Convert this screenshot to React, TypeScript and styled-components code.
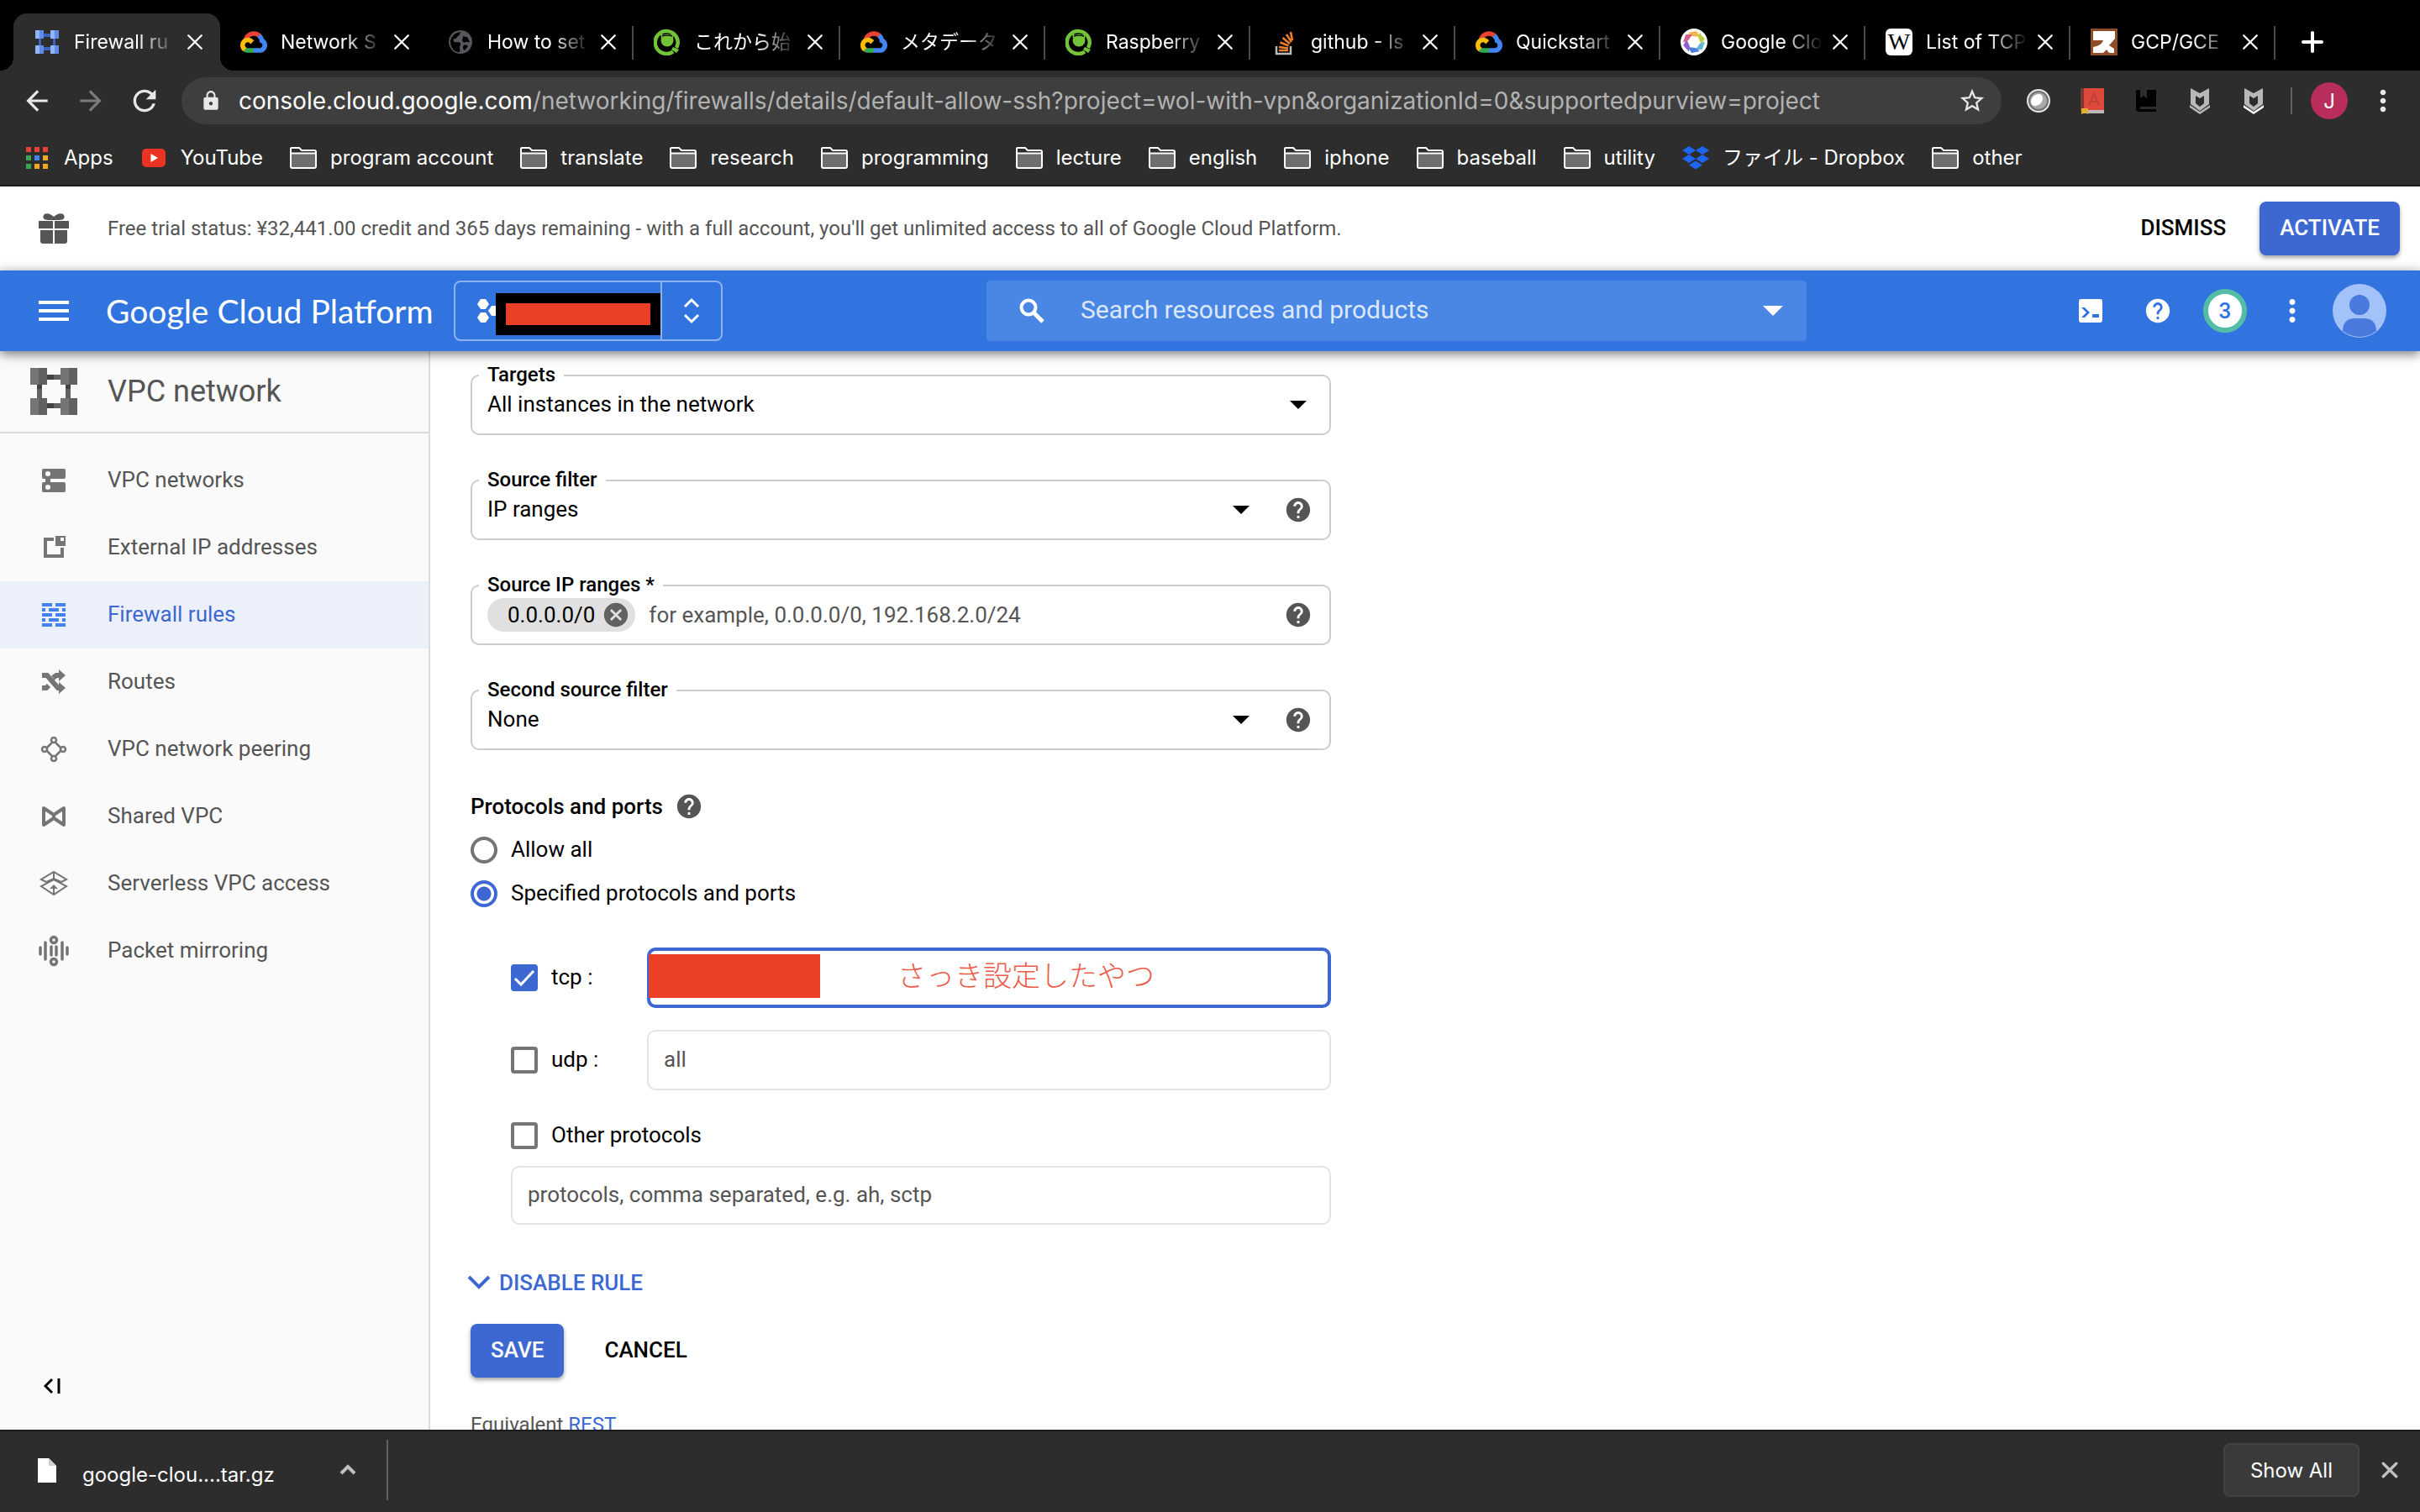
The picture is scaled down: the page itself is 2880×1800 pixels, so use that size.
import React, { useState } from "react";
import styled, { createGlobalStyle, css } from "styled-components";
import {
  MdArrowBack,
  MdArrowForward,
  MdCancel,
  MdHelp,
  MdLock,
  MdMoreVert,
  MdRefresh,
  MdStarBorder,
} from "react-icons/md";

const ui = `Inter, "Noto Sans CJK JP", sans-serif`;
const roboto = `Roboto, "Noto Sans CJK JP", sans-serif`;

const color = {
  chrome: "#2d2d2d",
  bar: "#3174e0",
  primary: "#3d68d2",
  text: "#000",
  muted: "#555",
  icon: "#757575",
  redact: "#ec4026",
};

const Global = createGlobalStyle`
  *, *::before, *::after { box-sizing: border-box; }
  body { margin: 0; background: #fff; font-family: ${roboto}; }
  button, input, select { font: inherit; color: inherit; margin: 0; }
  button { background: none; border: 0; padding: 0; cursor: pointer; }
  a { color: inherit; text-decoration: none; }
  svg { display: block; flex: none; }
  ul { list-style: none; margin: 0; padding: 0; }
`;

const Page = styled.div`
  display: flex;
  flex-direction: column;
  height: 100vh;
  overflow: hidden;
`;

/* ---------- browser window ---------- */

const TabStrip = styled.div`
  display: flex;
  align-items: flex-end;
  flex: none;
  height: 84px;
  padding: 0 172px 0 16px;
  background: #000;
  font-family: ${ui};
`;

const TabItem = styled.div<{ $active?: boolean; $line?: boolean; $wide?: boolean }>`
  position: relative;
  display: flex;
  align-items: center;
  flex: 1 1 ${(p) => (p.$wide ? 246 : 244)}px;
  min-width: 0;
  height: 68px;
  padding: 0 20px 0 24px;
  color: #fff;
  font-size: 23px;
  ${(p) =>
    p.$line &&
    css`
      &::after {
        content: "";
        position: absolute;
        right: 0;
        top: 15px;
        width: 2px;
        height: 40px;
        background: #4a4a4a;
      }
    `}
  ${(p) =>
    p.$active &&
    css`
      background: ${color.chrome};
      border-radius: 16px 16px 0 0;
      &::before,
      &::after {
        content: "";
        position: absolute;
        bottom: 0;
        width: 16px;
        height: 16px;
      }
      &::before {
        left: -16px;
        background: radial-gradient(circle at 0 0, transparent 16px, ${color.chrome} 16px);
      }
      &::after {
        right: -16px;
        background: radial-gradient(circle at 100% 0, transparent 16px, ${color.chrome} 16px);
      }
    `}
`;

const TabTitle = styled.a`
  flex: 1;
  min-width: 0;
  margin: 0 8px 0 16px;
  overflow: hidden;
  white-space: nowrap;
  line-height: 36px;
  mask-image: linear-gradient(to right, #000 60%, transparent 98%);
`;

const IconButton = styled.button`
  display: grid;
  place-items: center;
  flex: none;
`;

const NewTab = styled(IconButton)`
  width: 88px;
  height: 68px;
  margin-right: -88px;
  color: #fff;
`;

const Toolbar = styled.div`
  display: flex;
  align-items: center;
  flex: none;
  height: 72px;
  padding: 0 12px;
  background: ${color.chrome};
  color: #e8e8e8;
  font-family: ${ui};
`;

const NavButton = styled(IconButton)<{ $dim?: boolean }>`
  width: 64px;
  height: 56px;
  color: ${(p) => (p.$dim ? "#7d7d7d" : "#e8e8e8")};
`;

const Omnibox = styled.div`
  display: flex;
  align-items: center;
  flex: 1;
  min-width: 0;
  height: 56px;
  margin: 0 12px;
  padding: 0 18px 0 22px;
  gap: 20px;
  border-radius: 28px;
  background: #3e3e3e;
`;

const Url = styled.div`
  flex: 1;
  min-width: 0;
  overflow: hidden;
  white-space: nowrap;
  font-size: 28px;
  line-height: 40px;
  color: #b2b2b2;
  strong {
    font-weight: 400;
    color: #fff;
  }
`;

const Divider = styled.span<{ $h: number; $m: number }>`
  flex: none;
  width: 2px;
  height: ${(p) => p.$h}px;
  margin: 0 ${(p) => p.$m}px;
  background: #606060;
`;

const Profile = styled.button`
  flex: none;
  width: 44px;
  height: 44px;
  margin: 0 10px;
  border-radius: 50%;
  background: #b92d5d;
  color: #fff;
  font-size: 24px;
`;

const Bookmarks = styled.nav`
  display: flex;
  align-items: center;
  gap: 32px;
  flex: none;
  height: 66px;
  padding: 0 28px;
  border-bottom: 2px solid #1c1c1f;
  background: ${color.chrome};
  font-family: ${ui};
`;

const Bookmark = styled.a`
  display: flex;
  align-items: center;
  gap: 16px;
  color: #fff;
  font-size: 24px;
  line-height: 36px;
  white-space: nowrap;
`;

/* ---------- console header ---------- */

const Banner = styled.section`
  display: flex;
  align-items: center;
  flex: none;
  height: 100px;
  padding: 0 24px 0 44px;
  background: linear-gradient(#fff 88%, #f4f4f4);
  color: ${color.muted};
`;

const BannerText = styled.p`
  flex: 1;
  margin: 0 0 0 44px;
  font-size: 24px;
  line-height: 32px;
`;

const Button = styled.button<{ $filled?: boolean }>`
  flex: none;
  height: 64px;
  padding: 0 24px 2px;
  border-radius: 8px;
  font-size: 26px;
  font-weight: 500;
  line-height: 32px;
  color: ${(p) => (p.$filled ? "#fff" : color.text)};
  background: ${(p) => (p.$filled ? color.primary : "transparent")};
  box-shadow: ${(p) => (p.$filled ? "0 3px 5px rgba(0, 0, 0, 0.35)" : "none")};
`;

const BannerActions = styled.div`
  display: flex;
  gap: 16px;
`;

const ConsoleBar = styled.header`
  position: relative;
  z-index: 1;
  display: flex;
  align-items: center;
  flex: none;
  height: 96px;
  padding: 0 32px 0 44px;
  background: ${color.bar};
  color: #fff;
  box-shadow: 0 4px 12px rgba(0, 0, 0, 0.5);
`;

const Brand = styled.a`
  width: 414px;
  margin-left: 42px;
  font-family: Lato, sans-serif;
  font-size: 39px;
  line-height: 48px;
  white-space: nowrap;
`;

const ProjectPicker = styled.button`
  display: flex;
  align-items: center;
  flex: none;
  width: 320px;
  height: 72px;
  border: 2px solid rgba(255, 255, 255, 0.45);
  border-radius: 8px;
  color: #fff;
`;

const ProjectName = styled.span`
  display: flex;
  align-items: center;
  flex: 1;
  height: 100%;
  padding-left: 26px;
  border-right: 2px solid rgba(255, 255, 255, 0.45);
`;

const HiddenName = styled.span`
  flex: 1;
  height: 50px;
  margin-top: 14px;
  margin-bottom: 6px;
  border: 12px solid #000;
  background: ${color.redact};
`;

const PickerArrows = styled.span`
  display: grid;
  place-items: center;
  width: 70px;
`;

const Search = styled.label`
  display: flex;
  align-items: center;
  flex: 1 1 0;
  max-width: 976px;
  height: 72px;
  margin-left: 314px;
  padding: 0 28px 0 36px;
  border-radius: 4px;
  background: #4a87e5;
  input {
    flex: 1;
    min-width: 0;
    margin-left: 40px;
    padding: 0 0 4px;
    border: 0;
    outline: 0;
    background: none;
    font-size: 30px;
  }
  input::placeholder {
    color: #dbe7fa;
    opacity: 1;
  }
`;

const Tools = styled.div`
  display: flex;
  align-items: center;
  margin-left: auto;
`;

const Tool = styled(IconButton)`
  width: 80px;
  height: 80px;
  color: #fff;
`;

const Count = styled.span`
  display: grid;
  place-items: center;
  width: 52px;
  height: 52px;
  border: 6px solid #54bda5;
  border-radius: 50%;
  background: #fff;
  color: ${color.bar};
  font-size: 26px;
  font-weight: 500;
`;

/* ---------- sidebar ---------- */

const Body = styled.div`
  display: flex;
  flex: 1;
  min-height: 0;
`;

const Sidebar = styled.aside`
  display: flex;
  flex-direction: column;
  flex: none;
  width: 512px;
  border-right: 2px solid #dcdcdc;
  background: #fafafa;
  color: ${color.muted};
`;

const Product = styled.h1`
  display: flex;
  align-items: center;
  gap: 36px;
  height: 98px;
  margin: 0 0 16px;
  padding: 0 36px;
  border-bottom: 2px solid #dcdcdc;
  font-size: 36px;
  font-weight: 400;
`;

const NavLink = styled.a<{ $active?: boolean }>`
  display: flex;
  align-items: center;
  gap: 44px;
  height: 80px;
  padding: 0 44px;
  font-size: 26px;
  line-height: 32px;
  color: ${(p) => (p.$active ? color.primary : color.muted)};
  background: ${(p) => (p.$active ? "#ecf0fa" : "transparent")};
  svg {
    color: ${(p) => (p.$active ? "#4480ee" : color.icon)};
  }
  span {
    padding-bottom: 2px;
  }
`;

const Collapse = styled(IconButton)`
  margin: auto 0 32px 42px;
  width: 40px;
  height: 40px;
  color: #000;
`;

/* ---------- form ---------- */

const Main = styled.main`
  flex: 1;
  min-width: 0;
  overflow: hidden;
  padding: 28px 48px 0;
  color: ${color.text};
  font-size: 26px;
  line-height: 32px;
`;

const Form = styled.form`
  display: flex;
  flex-direction: column;
  max-width: 1024px;
`;

const Fields = styled.div`
  display: flex;
  flex-direction: column;
  gap: 53px;
`;

const FieldBox = styled.div`
  position: relative;
  display: flex;
  align-items: center;
  height: 72px;
  padding: 0 20px 0 18px;
  border: 2px solid #ccc;
  border-radius: 10px;
  > label {
    position: absolute;
    top: -18px;
    left: 8px;
    padding: 0 10px;
    background: #fff;
    font-size: 24px;
    font-weight: 500;
  }
`;

const Select = styled.select`
  flex: 1;
  min-width: 0;
  height: 100%;
  padding: 0 0 2px;
  border: 0;
  outline: 0;
  appearance: none;
  background: none;
`;

const HelpButton = styled(IconButton)`
  width: 34px;
  height: 34px;
  color: #555;
`;

const CaretSlot = styled.span<{ $gap?: boolean }>`
  display: grid;
  place-items: center;
  width: 34px;
  margin-right: ${(p) => (p.$gap ? 34 : 0)}px;
  pointer-events: none;
`;

const Chip = styled.span`
  display: flex;
  align-items: center;
  gap: 8px;
  flex: none;
  height: 40px;
  padding: 0 6px 0 24px;
  border-radius: 20px;
  background: #e0e0e0;
  button {
    color: #616161;
  }
`;

const PlainInput = styled.input`
  flex: 1;
  min-width: 0;
  height: 100%;
  padding: 0 0 0 16px;
  border: 0;
  outline: 0;
  background: none;
  &::placeholder {
    color: ${color.muted};
    opacity: 1;
  }
`;

const Heading = styled.h2`
  display: flex;
  align-items: center;
  gap: 14px;
  height: 32px;
  margin: 51px 0 20px;
  font-size: 26px;
  font-weight: 500;
`;

const Choices = styled.div`
  display: flex;
  flex-direction: column;
  gap: 20px;
`;

const Choice = styled.label`
  display: flex;
  align-items: center;
  gap: 16px;
  height: 32px;
`;

const ChoiceText = styled.span`
  padding-bottom: 2px;
`;

const Radio = styled.input`
  appearance: none;
  flex: none;
  width: 32px;
  height: 32px;
  border: 4px solid #757575;
  border-radius: 50%;
  background: #fff;
  &:checked {
    border-color: ${color.primary};
    background: radial-gradient(circle, ${color.primary} 8px, #fff 9px);
  }
`;

const Check = styled.span`
  display: grid;
  flex: none;
  width: 32px;
  height: 32px;
  > * {
    grid-area: 1 / 1;
  }
  svg {
    pointer-events: none;
  }
  input {
    appearance: none;
    width: 32px;
    height: 32px;
    border: 4px solid #757575;
    border-radius: 4px;
    background: #fff;
  }
  input:checked {
    border-color: ${color.primary};
    background: ${color.primary};
  }
`;

const Ports = styled.div`
  display: flex;
  flex-direction: column;
  gap: 26px;
  margin: 48px 0 38px 48px;
`;

const PortRow = styled.div`
  display: grid;
  grid-template-columns: 162px 1fr;
  align-items: center;
`;

const PortField = styled.div`
  position: relative;
`;

const PortInput = styled.input<{ $active?: boolean; $short?: boolean }>`
  display: block;
  width: 100%;
  height: ${(p) => (p.$short ? 70 : 72)}px;
  padding: 0 18px 2px;
  border: ${(p) => (p.$active ? `4px solid ${color.primary}` : "2px solid #e3e3e3")};
  border-radius: 10px;
  outline: 0;
  background: #fff;
  &::placeholder {
    color: ${color.muted};
    opacity: 1;
  }
`;

const Redaction = styled.span`
  position: absolute;
  left: 2px;
  top: 8px;
  width: 204px;
  height: 52px;
  background: ${color.redact};
`;

const Note = styled.span`
  position: absolute;
  left: 298px;
  top: 8px;
  color: #ec5a48;
  font-family: "Noto Sans CJK JP", sans-serif;
  font-size: 34px;
  font-weight: 300;
  line-height: 48px;
  white-space: nowrap;
`;

const OtherPorts = styled.div`
  display: flex;
  flex-direction: column;
  gap: 20px;
  margin-left: 48px;
`;

const Toggle = styled.button`
  display: flex;
  align-items: center;
  align-self: flex-start;
  gap: 10px;
  margin: 53px 0 33px -4px;
  color: ${color.primary};
  font-weight: 500;
`;

const Actions = styled.div`
  display: flex;
  gap: 24px;
`;

const Equivalent = styled.p`
  margin: 40px 0 0;
  color: ${color.muted};
  font-size: 24px;
  a {
    color: ${color.primary};
  }
`;

/* ---------- download shelf ---------- */

const Shelf = styled.footer`
  display: flex;
  align-items: center;
  flex: none;
  height: 98px;
  padding: 0 18px 4px 40px;
  border-top: 2px solid #1c1c1e;
  background: ${color.chrome};
  color: #fff;
  font-family: ${ui};
`;

const FileName = styled.a`
  width: 290px;
  margin: 12px 0 0 26px;
  font-size: 24px;
  line-height: 36px;
`;

const ShowAll = styled.button`
  height: 64px;
  margin-left: auto;
  padding: 0 30px;
  border: 2px solid #424444;
  border-radius: 8px;
  background: #3a3a3a;
  color: #fff;
  font-size: 24px;
`;

const ShelfClose = styled(IconButton)`
  width: 36px;
  height: 36px;
  margin-left: 18px;
  color: #c0c0c0;
`;

/* ---------- icons ---------- */

const Cross = ({ size = 18, w = 3 }: { size?: number; w?: number }) => (
  <svg width={size} height={size} viewBox="0 0 18 18" fill="none" stroke="currentColor" strokeWidth={w} strokeLinecap="round">
    <path d="M2 2l14 14M16 2L2 16" />
  </svg>
);

const Caret = ({ w = 20 }: { w?: number }) => (
  <svg width={w} height={w / 2} viewBox="0 0 20 10" fill="currentColor">
    <path d="M0 0h20L10 10z" />
  </svg>
);

const SearchIcon = () => (
  <svg width="36" height="36" viewBox="0 0 36 36" fill="none" stroke="currentColor">
    <circle cx="14" cy="14" r="8.500" strokeWidth="4" />
    <path d="M20 20l11 11" strokeWidth="5" />
  </svg>
);

const VpcIcon = ({ size, light, dark, deep }: { size: number; light: string; dark: string; deep: string }) => (
  <svg width={size} height={size} viewBox="0 0 56 56">
    <path fill={dark} d="M8 18h6v20H8zM42 18h6v20h-6zM18 8h20v6H18zM18 42h20v6H18z" />
    <path fill={deep} d="M20 8h8v6h-8zM20 42h8v6h-8zM8 20h6v5H8zM42 20h6v5h-6z" />
    {[[0, 0], [36, 0], [0, 36], [36, 36]].map(([x, y]) => (
      <g key={`${x}-${y}`}>
        <rect x={x} y={y} width="10" height="20" fill={light} />
        <rect x={x + 10} y={y} width="10" height="20" fill={dark} />
      </g>
    ))}
  </svg>
);

const TabVpc = () => (
  <svg width="32" height="32" viewBox="0 0 32 32">
    <path fill="#3c62c0" d="M6 11h3v10H6zM23 11h3v10h-3zM11 6h10v4H11zM11 22h10v4H11z" />
    <path fill="#93b4f4" d="M2 2h5v10H2zM20 2h5v10h-5zM2 20h5v10H2zM20 20h5v10h-5z" />
    <path fill="#5f8be6" d="M7 2h5v10H7zM25 2h5v10h-5zM7 20h5v10H7zM25 20h5v10h-5z" />
  </svg>
);

const GcpIcon = () => (
  <svg width="32" height="26" viewBox="0 0 256 206">
    <path fill="#EA4335" d="M170.252 56.819l22.253-22.253 1.483-9.37C153.437-11.677 88.976-7.496 52.42 33.92 42.267 45.423 34.734 59.764 30.717 74.573l7.97-1.123 44.505-7.34 3.436-3.513c19.797-21.742 53.27-24.667 76.128-6.168z" />
    <path fill="#4285F4" d="M224.205 73.918a100.249 100.249 0 0 0-30.217-48.722l-31.232 31.232a55.515 55.515 0 0 1 20.379 44.037v5.544c15.35 0 27.797 12.445 27.797 27.796 0 15.352-12.446 27.485-27.797 27.485h-55.671l-5.466 5.934v33.34l5.466 5.231h55.67c39.93.311 72.553-31.494 72.864-71.424a72.303 72.303 0 0 0-31.793-60.453" />
    <path fill="#34A853" d="M71.87 205.796h55.593V161.29H71.87a27.275 27.275 0 0 1-11.4-2.498l-7.887 2.42-22.409 22.253-1.952 7.574c12.567 9.489 27.9 14.825 43.647 14.757" />
    <path fill="#FBBC05" d="M71.87 61.425C31.94 61.664-.237 94.228.001 134.158a72.301 72.301 0 0 0 28.222 56.88l32.248-32.246c-13.99-6.322-20.208-22.786-13.887-36.776 6.32-13.99 22.786-20.208 36.775-13.888a27.796 27.796 0 0 1 13.887 13.888l32.248-32.248A72.224 72.224 0 0 0 71.87 61.425" />
  </svg>
);

const GlobeIcon = () => (
  <svg width="32" height="32" viewBox="0 0 32 32">
    <circle cx="16" cy="16" r="14" fill="#56575c" />
    <path fill="#000" d="M17 4c-3 1-1 4-4 5-2 1-1 3-4 3-2 0-2 3 0 4 3 1 6-1 7 2 1 2-2 3-1 5 1 3-1 4 1 5C8 29 4 22 4 15 5 9 10 4 17 4zM19 9c2 0 3 2 5 1l3 6c-1 1-3-1-5 0-2 2-4-1-4-3 0-1 2-2 1-4zM20 20c2-1 4 0 5 1l-4 5c-2-1-3-5-1-6z" />
  </svg>
);

const QiitaIcon = () => (
  <svg width="32" height="32" viewBox="0 0 32 32">
    <path d="M27 23A13.500 13.500 0 1 0 23 27.500" fill="none" stroke="#73c238" strokeWidth="4.500" />
    <path d="M23 22l7 3-3 4-6-4z" fill="#73c238" />
    <circle cx="16" cy="14" r="7.500" fill="#73c238" />
    <path d="M8 6l5 2h6l5-2-1 6H9z" fill="#73c238" />
    <path d="M10 9c3-1 9-1 12 0" stroke="#000" strokeWidth="1.500" fill="none" />
  </svg>
);

const StackIcon = () => (
  <svg width="32" height="32" viewBox="0 0 32 32" fill="none">
    <path d="M7 21v9h17v-9" stroke="#b9bbbd" strokeWidth="2.500" />
    <path d="M10 26h11M10 22l11 1.500M11.500 16.500l10 4M14.500 11l8.500 7M19 7l6 9M24 4l2 10" stroke="#ee7f2d" strokeWidth="2.600" />
  </svg>
);

const WheelIcon = () => (
  <svg width="32" height="32" viewBox="0 0 32 32">
    <circle cx="16" cy="16" r="16" fill="#fff" />
    {["#f0b64a", "#b9cf4a", "#63b7d8", "#4a7fd8", "#8c5fd0", "#d55f8c"].map((c, i) => (
      <path key={c} d="M9 5l10-2 4 7-9-1z" fill={c} transform={`rotate(${i * 60} 16 16)`} />
    ))}
  </svg>
);

const WikiBadge = styled.span`
  display: grid;
  place-items: center;
  flex: none;
  width: 32px;
  height: 32px;
  border-radius: 6px;
  background: #fff;
  color: #000;
  font-family: "Liberation Serif", serif;
  font-size: 28px;
  line-height: 32px;
`;

const SuIcon = () => (
  <svg width="32" height="32" viewBox="0 0 32 32">
    <rect width="32" height="32" fill="#8e4d28" />
    <path d="M3 3h26v9l-7 8 6 4v5h-6l-3-4-4 4H3v-7c6-1 10-3 12-8H3z" fill="#fff" />
  </svg>
);

const FolderIcon = () => (
  <svg width="32" height="28" viewBox="0 0 32 28" fill="none" stroke="#fff" strokeWidth="2">
    <path d="M1 7h30v17a2 2 0 0 1-2 2H3a2 2 0 0 1-2-2z" fill="#6e6e6e" />
    <path d="M1 8V3a1 1 0 0 1 1-1h9l3 3h15a2 2 0 0 1 2 2v2" fill={color.chrome} />
    <path d="M1 8.500h30" />
  </svg>
);

const AppsIcon = () => (
  <svg width="32" height="32" viewBox="0 0 32 32">
    {["#ea4335", "#ea4335", "#ea4335", "#34a853", "#4285f4", "#f5a623", "#34a853", "#f5a623", "#f5a623"].map((c, i) => (
      <rect key={i} x={3 + (i % 3) * 10} y={3 + Math.floor(i / 3) * 10} width="6" height="6" fill={c} />
    ))}
  </svg>
);

const YouTubeIcon = () => (
  <svg width="32" height="32" viewBox="0 0 32 32">
    <rect x="2" y="5" width="28" height="22" rx="5" fill="#ea3323" />
    <path d="M12.500 11v10l8.500-5z" fill="#fff" />
  </svg>
);

const DropboxIcon = () => (
  <svg width="32" height="28" viewBox="0 0 32 28" fill="#1f66f5">
    <path d="M8 0l8 5-8 5-8-5zM24 0l8 5-8 5-8-5zM8 10l8 5-8 5-8-5zM24 10l8 5-8 5-8-5zM16 17.500l8 5-8 5-8-5z" />
  </svg>
);

const ExtCircle = () => (
  <svg width="32" height="32" viewBox="0 0 32 32">
    <circle cx="16" cy="16" r="13" fill="#707070" stroke="#e4e4e4" strokeWidth="2" />
    <circle cx="16" cy="16" r="10" fill="#a8a8a8" />
    <ellipse cx="14" cy="15" rx="8" ry="6" fill="#fff" transform="rotate(-45 14 15)" />
  </svg>
);

const ExtDictionary = () => (
  <svg width="32" height="32" viewBox="0 0 32 32">
    <path d="M2 1h4v27H2z" fill="#7a3a34" />
    <path d="M6 1h24v26H6z" fill="#dd4a3c" />
    <path d="M6 27h24v4H6z" fill="#b9b9b9" />
    <path d="M3 25h8v7l-3-2-5 2z" fill="#e6ad2c" />
    <path d="M12 21l6-14 6 14M14 17h8" fill="none" stroke="#bd4035" strokeWidth="2" />
  </svg>
);

const ExtBook = () => (
  <svg width="32" height="32" viewBox="0 0 32 32">
    <path d="M5 3h4v10l4-3 4 3V3h11v20H9v3h19v3H8a4 4 0 0 1-4-4V4z" fill="#000" />
  </svg>
);

const ExtShield = ({ tip }: { tip: string }) => (
  <svg width="32" height="32" viewBox="0 0 32 32">
    <path d="M5 1l11 6 11-6v19l-11 8-11-8z" fill="#b8b8b8" />
    <path d="M11 10l5 3 5-3v9l-5 4-5-4z" fill={color.chrome} />
    <path d="M4 21l12 8 12-8v3l-12 8-12-8z" fill={tip} />
  </svg>
);

const GiftIcon = () => (
  <svg width="40" height="40" viewBox="0 0 40 40" fill="#555">
    <path d="M8 4c2-3 8-2 12 2 4-4 10-5 12-2 2 4-1 6-5 6H13C9 10 6 8 8 4z" />
    <path d="M2 11h17v9H2zM21 11h17v9H21zM4 22h15v16H7a3 3 0 0 1-3-3zM21 22h15v13a3 3 0 0 1-3 3H21z" />
  </svg>
);

const MenuIcon = () => (
  <svg width="40" height="40" viewBox="0 0 40 40" fill="currentColor">
    <path d="M2 8h36v4H2zM2 18h36v4H2zM2 28h36v4H2z" />
  </svg>
);

const HexIcon = () => (
  <svg width="22" height="28" viewBox="0 0 22 28" fill="currentColor">
    <path d="M4 0h6l4 6-4 6H4L0 6zM4 16h6l4 6-4 6H4l-4-6zM17 8h5v12h-5l-4-6z" />
  </svg>
);

const UpDownIcon = () => (
  <svg width="20" height="32" viewBox="0 0 20 32" fill="none" stroke="currentColor" strokeWidth="3">
    <path d="M2 11l8-8 8 8M2 21l8 8 8-8" />
  </svg>
);

const ShellIcon = () => (
  <svg width="28" height="28" viewBox="0 0 28 28">
    <rect width="28" height="28" rx="3" fill="#fff" />
    <path d="M3 10l6 6-6 6h4l6-6-6-6zM16 18h8v4h-8z" fill={color.bar} />
  </svg>
);

const UserIcon = () => (
  <svg width="64" height="64" viewBox="0 0 64 64">
    <circle cx="32" cy="32" r="32" fill="#a4c2fa" />
    <circle cx="32" cy="25" r="12" fill="#4a7ade" />
    <path d="M12 56c0-10 6-15 14-15h12c8 0 14 5 14 15a32 32 0 0 1-40 0z" fill="#4a7ade" />
  </svg>
);

const navIcons: Record<string, React.ReactNode> = {
  networks: (
    <g fill="currentColor">
      <path fillRule="evenodd" d="M8 6h24a2 2 0 0 1 2 2v8a2 2 0 0 1-2 2H8a2 2 0 0 1-2-2V8a2 2 0 0 1 2-2zm5 3a3 3 0 1 0 0 6 3 3 0 0 0 0-6zM8 22h24a2 2 0 0 1 2 2v8a2 2 0 0 1-2 2H8a2 2 0 0 1-2-2v-8a2 2 0 0 1 2-2zm5 3a3 3 0 1 0 0 6 3 3 0 0 0 0-6z" />
      <path d="M10 17h6v6h-6z" />
    </g>
  ),
  external: (
    <g fill="currentColor">
      <path d="M8 8h12v4h-8v16h16v-8h4v12H8z" />
      <path fillRule="evenodd" d="M22 6h12v12H22zm6 2v4h4V8z" />
    </g>
  ),
  firewall: (
    <path fill="currentColor" d="M6 6h12v4H6zM22 6h12v4H22zM6 12h4v4H6zM14 12h12v4H14zM30 12h4v4h-4zM6 18h12v4H6zM22 18h12v4H22zM6 24h4v4H6zM14 24h12v4H14zM30 24h4v4h-4zM6 30h12v4H6zM22 30h12v4H22z" />
  ),
  routes: (
    <g>
      <path d="M6 12h6l13 15h3M6 27h5l3-3M19 15l4-3h5" fill="none" stroke="currentColor" strokeWidth="6" />
      <path d="M26 5l8 7-8 7zM26 20l8 7-8 7z" fill="currentColor" />
    </g>
  ),
  peering: (
    <g fill="none" stroke="currentColor" strokeWidth="2.500">
      <circle cx="20" cy="9" r="3" />
      <circle cx="9" cy="20" r="3" />
      <circle cx="31" cy="20" r="3" />
      <circle cx="20" cy="31" r="3" />
      <path d="M18 12l-6 6M22 12l6 6M12 22l6 6M22 28l6-6" />
    </g>
  ),
  shared: (
    <path d="M8 10l12 8 12-8v20l-12-8-12 8zM20 18v4" fill="none" stroke="currentColor" strokeWidth="4" strokeLinejoin="round" />
  ),
  serverless: (
    <g fill="none" stroke="currentColor" strokeWidth="2">
      <path d="M11 18l-6-3 15-9 15 9-6 3" />
      <path d="M20 15l15 8-15 10L5 23z" />
      <path d="M11 18l9-4 9 4M20 6v8M20 33V23" />
      <path d="M20 21l5 5H15z" fill="currentColor" stroke="none" />
    </g>
  ),
  mirroring: (
    <g fill="none" stroke="currentColor" strokeWidth="3.500">
      <path d="M4 16v8M10 10v20M17 15v10M23 15v10M30 10v20M36 16v8" strokeLinecap="round" />
      <circle cx="20" cy="7" r="3.500" />
      <circle cx="20" cy="33" r="3.500" />
    </g>
  ),
};

/* ---------- data ---------- */

const tabs: { title: string; icon: React.ReactNode }[] = [
  { title: "Firewall ru", icon: <TabVpc /> },
  { title: "Network S", icon: <GcpIcon /> },
  { title: "How to set", icon: <GlobeIcon /> },
  { title: "これから始", icon: <QiitaIcon /> },
  { title: "メタデータ", icon: <GcpIcon /> },
  { title: "Raspberry", icon: <QiitaIcon /> },
  { title: "github - Is", icon: <StackIcon /> },
  { title: "Quickstart", icon: <GcpIcon /> },
  { title: "Google Clo", icon: <WheelIcon /> },
  { title: "List of TCP", icon: <WikiBadge>W</WikiBadge> },
  { title: "GCP/GCE", icon: <SuIcon /> },
];

const bookmarks: [string, React.ReactNode][] = [
  ["Apps", <AppsIcon />],
  ["YouTube", <YouTubeIcon />],
  ["program account", <FolderIcon />],
  ["translate", <FolderIcon />],
  ["research", <FolderIcon />],
  ["programming", <FolderIcon />],
  ["lecture", <FolderIcon />],
  ["english", <FolderIcon />],
  ["iphone", <FolderIcon />],
  ["baseball", <FolderIcon />],
  ["utility", <FolderIcon />],
  ["ファイル - Dropbox", <DropboxIcon />],
  ["other", <FolderIcon />],
];

const navItems = [
  ["networks", "VPC networks"],
  ["external", "External IP addresses"],
  ["firewall", "Firewall rules"],
  ["routes", "Routes"],
  ["peering", "VPC network peering"],
  ["shared", "Shared VPC"],
  ["serverless", "Serverless VPC access"],
  ["mirroring", "Packet mirroring"],
];

/* ---------- composed parts ---------- */

const Help = () => (
  <HelpButton type="button" aria-label="Help">
    <MdHelp size={34} />
  </HelpButton>
);

const SelectField = ({ id, label, value, help }: { id: string; label: string; value: string; help?: boolean }) => (
  <FieldBox>
    <label htmlFor={id}>{label}</label>
    <Select id={id} defaultValue={value}>
      <option>{value}</option>
    </Select>
    <CaretSlot $gap={help}>
      <Caret />
    </CaretSlot>
    {help && <Help />}
  </FieldBox>
);

const CheckBox = ({ checked, onChange, label }: { checked: boolean; onChange: (v: boolean) => void; label: string }) => (
  <Choice>
    <Check>
      <input type="checkbox" checked={checked} onChange={(e) => onChange(e.target.checked)} />
      {checked && (
        <svg width="32" height="32" viewBox="0 0 32 32" fill="none" stroke="#fff" strokeWidth="3">
          <path d="M5 17l7 7L27 8" />
        </svg>
      )}
    </Check>
    <ChoiceText>{label}</ChoiceText>
  </Choice>
);

export default function App() {
  const [mode, setMode] = useState("specified");
  const [tcp, setTcp] = useState(true);
  const [udp, setUdp] = useState(false);
  const [other, setOther] = useState(false);

  return (
    <Page>
      <Global />
      <TabStrip>
        {tabs.map((t, i) => (
          <TabItem key={t.title} $active={i === 0} $line={i > 1} $wide={i < 4}>
            {t.icon}
            <TabTitle href="#">{t.title}</TabTitle>
            <IconButton aria-label="Close tab">
              <Cross size={20} w={2} />
            </IconButton>
          </TabItem>
        ))}
        <NewTab aria-label="New tab">
          <svg width="26" height="26" viewBox="0 0 26 26" stroke="currentColor" strokeWidth="4" strokeLinecap="round">
            <path d="M13 2v22M2 13h22" />
          </svg>
        </NewTab>
      </TabStrip>

      <Toolbar>
        <NavButton aria-label="Back"><MdArrowBack size={38} /></NavButton>
        <NavButton aria-label="Forward" $dim><MdArrowForward size={38} /></NavButton>
        <NavButton aria-label="Reload"><MdRefresh size={40} /></NavButton>
        <Omnibox>
          <MdLock size={26} />
          <Url>
            <strong>console.cloud.google.com</strong>
            /networking/firewalls/details/default-allow-ssh?project=wol-with-vpn&amp;organizationId=0&amp;supportedpurview=project
          </Url>
          <MdStarBorder size={34} />
        </Omnibox>
        <NavButton aria-label="Extension"><ExtCircle /></NavButton>
        <NavButton aria-label="Dictionary"><ExtDictionary /></NavButton>
        <NavButton aria-label="Reader"><ExtBook /></NavButton>
        <NavButton aria-label="Shield"><ExtShield tip="#b8b8b8" /></NavButton>
        <NavButton aria-label="Shield status"><ExtShield tip="#fff" /></NavButton>
        <Divider $h={32} $m={12} />
        <Profile aria-label="Profile">J</Profile>
        <NavButton aria-label="Browser menu"><MdMoreVert size={40} /></NavButton>
      </Toolbar>

      <Bookmarks>
        {bookmarks.map(([name, icon]) => (
          <Bookmark key={name} href="#">
            {icon}
            {name}
          </Bookmark>
        ))}
      </Bookmarks>

      <Banner>
        <GiftIcon />
        <BannerText>
          Free trial status: ¥32,441.00 credit and 365 days remaining - with a full account, you'll get unlimited access to all of Google Cloud Platform.
        </BannerText>
        <BannerActions>
          <Button>DISMISS</Button>
          <Button $filled>ACTIVATE</Button>
        </BannerActions>
      </Banner>

      <ConsoleBar>
        <IconButton aria-label="Navigation menu"><MenuIcon /></IconButton>
        <Brand href="#">Google Cloud Platform</Brand>
        <ProjectPicker aria-label="Select a project">
          <ProjectName>
            <HexIcon />
            <HiddenName />
          </ProjectName>
          <PickerArrows><UpDownIcon /></PickerArrows>
        </ProjectPicker>
        <Search>
          <SearchIcon />
          <input type="search" aria-label="Search" placeholder="Search resources and products" />
          <Caret w={24} />
        </Search>
        <Tools>
          <Tool aria-label="Cloud Shell"><ShellIcon /></Tool>
          <Tool aria-label="Help"><MdHelp size={34} /></Tool>
          <Tool><Count>3</Count></Tool>
          <Tool aria-label="More"><MdMoreVert size={42} /></Tool>
          <Tool aria-label="Account"><UserIcon /></Tool>
        </Tools>
      </ConsoleBar>

      <Body>
        <Sidebar>
          <Product>
            <VpcIcon size={56} light="#757575" dark="#616161" deep="#424242" />
            VPC network
          </Product>
          <nav>
            <ul>
              {navItems.map(([id, name]) => (
                <li key={id}>
                  <NavLink href="#" $active={id === "firewall"}>
                    <svg width="40" height="40" viewBox="0 0 40 40">{navIcons[id]}</svg>
                    <span>{name}</span>
                  </NavLink>
                </li>
              ))}
            </ul>
          </nav>
          <Collapse aria-label="Collapse menu">
            <svg width="20" height="20" viewBox="0 0 20 20" fill="none" stroke="currentColor" strokeWidth="3">
              <path d="M10 2L2 10l8 8M18 1v18" />
            </svg>
          </Collapse>
        </Sidebar>

        <Main>
          <Form onSubmit={(e) => e.preventDefault()}>
            <Fields>
              <SelectField id="targets" label="Targets" value="All instances in the network" />
              <SelectField id="source" label="Source filter" value="IP ranges" help />
              <FieldBox>
                <label htmlFor="ranges">Source IP ranges *</label>
                <Chip>
                  0.0.0.0/0
                  <IconButton type="button" aria-label="Remove 0.0.0.0/0">
                    <MdCancel size={34} />
                  </IconButton>
                </Chip>
                <PlainInput id="ranges" placeholder="for example, 0.0.0.0/0, 192.168.2.0/24" />
                <Help />
              </FieldBox>
              <SelectField id="second" label="Second source filter" value="None" help />
            </Fields>

            <Heading>
              Protocols and ports
              <Help />
            </Heading>
            <Choices>
              <Choice>
                <Radio type="radio" name="mode" checked={mode === "all"} onChange={() => setMode("all")} />
                <ChoiceText>Allow all</ChoiceText>
              </Choice>
              <Choice>
                <Radio type="radio" name="mode" checked={mode === "specified"} onChange={() => setMode("specified")} />
                <ChoiceText>Specified protocols and ports</ChoiceText>
              </Choice>
            </Choices>

            <Ports>
              <PortRow>
                <CheckBox checked={tcp} onChange={setTcp} label="tcp :" />
                <PortField>
                  <PortInput $active aria-label="tcp ports" />
                  <Redaction />
                  <Note>さっき設定したやつ</Note>
                </PortField>
              </PortRow>
              <PortRow>
                <CheckBox checked={udp} onChange={setUdp} label="udp :" />
                <PortField>
                  <PortInput aria-label="udp ports" placeholder="all" />
                </PortField>
              </PortRow>
            </Ports>

            <OtherPorts>
              <CheckBox checked={other} onChange={setOther} label="Other protocols" />
              <PortInput $short aria-label="Other protocols" placeholder="protocols, comma separated, e.g. ah, sctp" />
            </OtherPorts>

            <Toggle type="button">
              <svg width="28" height="18" viewBox="0 0 28 18" fill="none" stroke="currentColor" strokeWidth="4">
                <path d="M2 2l12 12L26 2" />
              </svg>
              DISABLE RULE
            </Toggle>

            <Actions>
              <Button type="submit" $filled>SAVE</Button>
              <Button type="button">CANCEL</Button>
            </Actions>

            <Equivalent>
              Equivalent <a href="#">REST</a>
            </Equivalent>
          </Form>
        </Main>
      </Body>

      <Shelf>
        <svg width="32" height="32" viewBox="0 0 32 32">
          <path d="M5 2h13l9 9v20H5z" fill="#fff" />
          <path d="M18 2v9h9z" fill="#d0d0d0" />
        </svg>
        <FileName href="#">google-clou....tar.gz</FileName>
        <IconButton aria-label="Download options">
          <svg width="52" height="20" viewBox="0 0 52 20" fill="none" stroke="#c0c0c0" strokeWidth="4">
            <path d="M18 14l8-8 8 8" />
          </svg>
        </IconButton>
        <Divider $h={72} $m={20} />
        <ShowAll>Show All</ShowAll>
        <ShelfClose aria-label="Close downloads"><Cross size={20} w={3} /></ShelfClose>
      </Shelf>
    </Page>
  );
}
